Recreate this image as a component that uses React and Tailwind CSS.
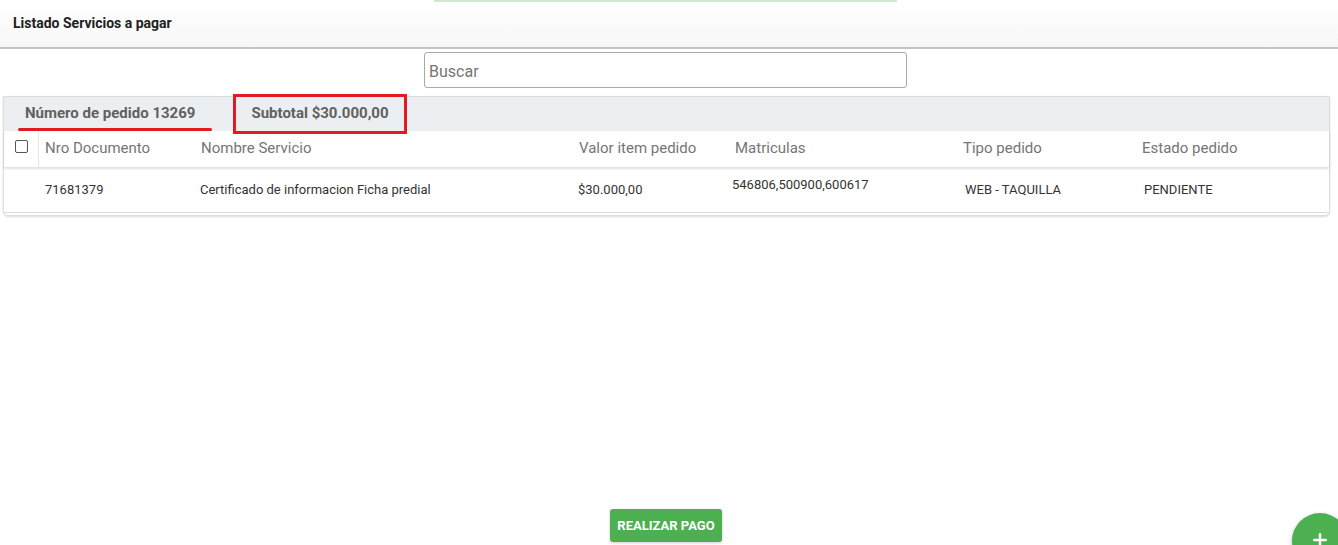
import { Plus } from 'lucide-react'

const COLS = 'grid grid-cols-[35px_156px_378px_156px_228px_179px_1fr]'

const HEADERS = ['Nro Documento', 'Nombre Servicio', 'Valor item pedido', 'Matriculas', 'Tipo pedido', 'Estado pedido']

export default function App() {
  return (
    <div className="relative h-[545px] w-full overflow-hidden bg-white flex flex-col" style={{ fontFamily: 'Roboto, "Liberation Sans", sans-serif' }}>
      {/* header */}
      <div className="relative h-[49px] shrink-0 bg-gradient-to-b from-white to-[#f7f7f7] border-b-2 border-[#c4c4c4] flex items-center px-[13px]">
        <div className="absolute top-0 left-[434px] w-[463px] h-[2px] bg-[#cfe8cf]" />
        <span className="text-[14px] font-bold text-[#212121]">Listado Servicios a pagar</span>
      </div>

      {/* search */}
      <div className="flex pl-[424px] pt-[3px]">
        <input
          placeholder="Buscar"
          className="w-[483px] h-[36px] border border-[#a9a9a9] rounded-[3px] px-[4px] pt-[3px] text-[16px] text-[#333] placeholder:text-[#757575] outline-none"
        />
      </div>

      {/* card */}
      <div className="mx-[3px] mt-[8px] w-[1327px] border border-[#dcdcdc] rounded-b-[5px] shadow-[0_1px_2px_rgba(0,0,0,0.15)]">
        <div className="h-[34px] bg-[#eceff1] flex items-stretch">
          <div className="relative ml-[14px] w-[194px] flex items-center pl-[7px] pb-[2px]">
            <span className="text-[15px] font-bold text-[#616161]">Número de pedido 13269</span>
            <div className="absolute left-0 right-0 bottom-0 h-[3px] rounded-full bg-[#e01b24]" />
          </div>
          <div className="ml-[21px] -my-[3px] w-[174px] border-[3px] border-[#e01b24] flex items-center justify-center pb-[2px]">
            <span className="text-[15px] font-bold text-[#616161]">Subtotal $30.000,00</span>
          </div>
        </div>

        <div className={`${COLS} h-[36px] items-center text-[15px] text-[#757575] shadow-[0_2px_2px_rgba(0,0,0,0.12)] relative`}>
          <div className="h-full flex items-start pt-[9px] pl-[11px] border-r border-[#e6e6e6]">
            <div className="w-[13px] h-[13px] border border-[#555] rounded-[2px]" />
          </div>
          {HEADERS.map(h => (
            <div key={h} className="pl-[6px] pb-[2px]">{h}</div>
          ))}
        </div>

        <div className={`${COLS} h-[46px] text-[13px] text-[#333] border-b border-[#dcdcdc]`}>
          <div />
          <div className="pl-[6px] flex items-center">71681379</div>
          <div className="pl-[5px] flex items-center">Certificado de informacion Ficha predial</div>
          <div className="pl-[5px] flex items-center">$30.000,00</div>
          <div className="pl-[3px] pt-[8px]">546806,500900,600617</div>
          <div className="pl-[8px] flex items-center">WEB - TAQUILLA</div>
          <div className="pl-[8px] flex items-center">PENDIENTE</div>
        </div>
        <div className="h-[2px]" />
      </div>

      {/* footer */}
      <div className="mt-auto flex justify-center pb-[3px] pr-[6px]">
        <button className="w-[112px] h-[33px] bg-[#4caf50] text-white text-[13px] font-bold rounded-[3px] shadow-[0_1px_3px_rgba(0,0,0,0.2)]">
          REALIZAR PAGO
        </button>
      </div>

      <div className="absolute left-[1292px] top-[513px] w-[56px] h-[56px] rounded-full bg-[#4caf50] shadow-[0_2px_5px_rgba(0,0,0,0.25)] flex items-center justify-center">
        <Plus className="w-[20px] h-[20px] text-white -mt-[2px]" strokeWidth={3} />
      </div>
    </div>
  )
}
